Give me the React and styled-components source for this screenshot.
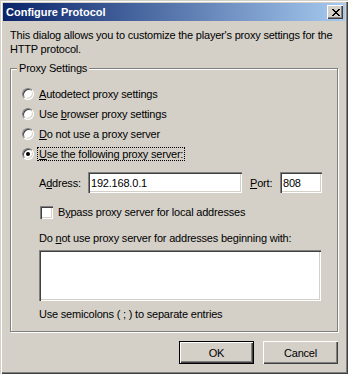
import React from "react";
import styled, { createGlobalStyle } from "styled-components";

const GlobalStyle = createGlobalStyle`
  body {
    margin: 0;
    background: #d4d0c8;
    font-family: "Liberation Sans", Arial, sans-serif;
    font-size: 11px;
    letter-spacing: -0.2px;
  }
`;

const sunken = `
  box-shadow: inset 1px 1px #808080, inset 2px 2px #404040,
    inset -1px -1px #ffffff, inset -2px -2px #d4d0c8;
`;

const raised = `
  box-shadow: inset 1px 1px #ffffff, inset -1px -1px #404040,
    inset -2px -2px #808080;
`;

const CloseGlyph = () => (
  <svg width="8" height="7" viewBox="0 0 8 7" shapeRendering="crispEdges">
    <path
      d="M0 0h2v1H0zM6 0h2v1H6zM1 1h2v1H1zM5 1h2v1H5zM2 2h4v1H2zM3 3h2v1H3zM2 4h4v1H2zM1 5h2v1H1zM5 5h2v1H5zM0 6h2v1H0zM6 6h2v1H6z"
      fill="#000"
    />
  </svg>
);

const App = () => {
  return (
    <>
      <GlobalStyle />
      <Window>
        <TitleBar>
          <Title>Configure Protocol</Title>
          <CloseButton>
            <CloseGlyph />
          </CloseButton>
        </TitleBar>
        <Body>
          <Intro>
            This dialog allows you to customize the player's proxy settings for the
            <br />
            HTTP protocol.
          </Intro>
          <Group>
            <Legend>Proxy Settings</Legend>
            <OptionRow>
              <Radio />
              <Label>
                <u>A</u>utodetect proxy settings
              </Label>
            </OptionRow>
            <OptionRow>
              <Radio />
              <Label>
                Use <u>b</u>rowser proxy settings
              </Label>
            </OptionRow>
            <OptionRow>
              <Radio />
              <Label>
                <u>D</u>o not use a proxy server
              </Label>
            </OptionRow>
            <OptionRow>
              <Radio checked />
              <Label focused>
                <u>U</u>se the following proxy server:
              </Label>
            </OptionRow>
            <AddressRow>
              <FieldLabel width={49}>
                A<u>d</u>dress:
              </FieldLabel>
              <TextBox readOnly tabIndex={-1} width={154} value="192.168.0.1" />
              <FieldLabel width={30} gap={8}>
                <u>P</u>ort:
              </FieldLabel>
              <TextBox readOnly tabIndex={-1} width={42} value="808" />
            </AddressRow>
            <CheckRow>
              <CheckBox />
              <span>
                B<u>y</u>pass proxy server for local addresses
              </span>
            </CheckRow>
            <Indented>
              Do <u>n</u>ot use proxy server for addresses beginning with:
            </Indented>
            <ExceptionList />
            <Hint>Use semicolons ( ; ) to separate entries</Hint>
          </Group>
          <Buttons>
            <PushButton isDefault>OK</PushButton>
            <PushButton>Cancel</PushButton>
          </Buttons>
        </Body>
      </Window>
    </>
  );
};

const Window = styled.div`
  width: 348px;
  height: 374px;
  box-sizing: border-box;
  padding: 3px;
  background: #d4d0c8;
  box-shadow: inset 1px 1px #d4d0c8, inset 2px 2px #ffffff,
    inset -1px -1px #404040, inset -2px -2px #808080;
  color: #000;
`;

const TitleBar = styled.div`
  height: 18px;
  display: flex;
  align-items: center;
  justify-content: space-between;
  padding: 0 2px 0 3px;
  background: linear-gradient(to right, #0a246a, #a6caf0);
`;

const Title = styled.span`
  color: #fff;
  font-weight: bold;
  font-size: 11px;
  line-height: 14px;
  letter-spacing: 0;
`;

const CloseButton = styled.div`
  width: 16px;
  height: 14px;
  display: flex;
  align-items: center;
  justify-content: center;
  background: #d4d0c8;
  padding-left: 1px;
  box-sizing: border-box;
  ${raised}
`;

const Body = styled.div`
  padding: 0 7px;
`;

const Intro = styled.div`
  margin-top: 7px;
  line-height: 14px;
  white-space: nowrap;
`;

const Group = styled.fieldset`
  margin: 5px 0 0;
  width: 328px;
  box-sizing: border-box;
  padding: 9px 0 10px 11px;
  border: 1px solid #808080;
  box-shadow: inset 1px 1px #ffffff, 1px 1px #ffffff;
  min-width: 0;
`;

const Legend = styled.legend`
  margin-left: -5px;
  padding: 0 2px;
  line-height: 14px;
  background: #d4d0c8;
`;

const OptionRow = styled.div`
  height: 20px;
  display: flex;
  align-items: center;
  gap: 3px;
`;

const Radio = styled.span`
  position: relative;
  width: 12px;
  height: 12px;
  box-sizing: border-box;
  border-radius: 50%;
  border: 1px solid;
  border-color: #808080 #ffffff #ffffff #808080;
  background: #fff;
  box-shadow: inset 1px 1px #404040, inset -1px -1px #d4d0c8;
  flex: none;

  &::after {
    content: "";
    display: ${(p) => (p.checked ? "block" : "none")};
    position: absolute;
    left: 3px;
    top: 3px;
    width: 4px;
    height: 4px;
    border-radius: 50%;
    background: #000;
  }
`;

const Label = styled.span`
  line-height: 12px;
  padding: 0 1px;
  border: 1px ${(p) => (p.focused ? "dotted #000" : "solid transparent")};
`;

const AddressRow = styled.div`
  margin: 8px 0 0 17px;
  height: 21px;
  display: flex;
  align-items: center;
`;

const FieldLabel = styled.span`
  width: ${(p) => p.width}px;
  margin-left: ${(p) => p.gap || 0}px;
  flex: none;
`;

const TextBox = styled.input`
  width: ${(p) => p.width}px;
  height: 21px;
  box-sizing: border-box;
  border: none;
  outline: none;
  margin: 0;
  padding: 0 3px;
  background: #fff;
  font-family: "Liberation Sans", Arial, sans-serif;
  font-size: 11px;
  letter-spacing: -0.2px;
  color: #000;
  ${sunken}
`;

const CheckRow = styled.div`
  margin: 9px 0 0 18px;
  height: 20px;
  display: flex;
  align-items: center;
  gap: 5px;
`;

const CheckBox = styled.span`
  width: 13px;
  height: 13px;
  box-sizing: border-box;
  background: #fff;
  flex: none;
  ${sunken}
`;

const Indented = styled.div`
  margin: 9px 0 0 17px;
  line-height: 14px;
`;

const ExceptionList = styled.div`
  margin: 5px 0 0 17px;
  width: 282px;
  height: 51px;
  background: #fff;
  ${sunken}
`;

const Hint = styled.div`
  margin: 6px 0 0 17px;
  line-height: 14px;
`;

const Buttons = styled.div`
  margin-top: 9px;
  display: flex;
  justify-content: flex-end;
  gap: 9px;
`;

const PushButton = styled.div`
  width: 75px;
  height: 23px;
  box-sizing: border-box;
  display: flex;
  align-items: center;
  justify-content: center;
  background: #d4d0c8;
  border: ${(p) => (p.isDefault ? "1px solid #000" : "none")};
  ${raised}
`;

export default App;
